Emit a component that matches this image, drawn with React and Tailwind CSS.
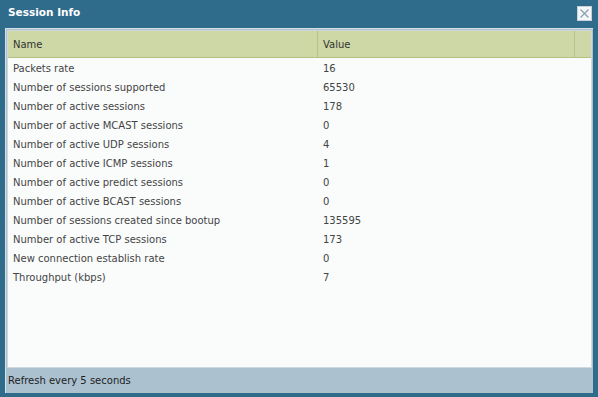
import React from "react";

const rows = [
  ["Packets rate", "16"],
  ["Number of sessions supported", "65530"],
  ["Number of active sessions", "178"],
  ["Number of active MCAST sessions", "0"],
  ["Number of active UDP sessions", "4"],
  ["Number of active ICMP sessions", "1"],
  ["Number of active predict sessions", "0"],
  ["Number of active BCAST sessions", "0"],
  ["Number of sessions created since bootup", "135595"],
  ["Number of active TCP sessions", "173"],
  ["New connection establish rate", "0"],
  ["Throughput (kbps)", "7"],
];

const SessionInfo = () => {
  return (
    <div
      className="w-[598px] h-[397px] bg-[#2f6b8b] flex flex-col px-[5px] pb-[4px]"
      style={{ fontFamily: "Tahoma, 'DejaVu Sans', sans-serif" }}
    >
      {/* Title bar */}
      <div className="h-[28px] flex items-center justify-between pl-[3px] pr-[1px] pb-[2px]">
        <span className="text-white font-bold text-[10.5px]">Session Info</span>
        <button className="w-[15px] h-[15px] bg-[#f4f7f9] border border-[#c7d3db] flex items-center justify-center">
          <svg width="11" height="11" viewBox="0 0 11 11">
            <path d="M1.5 1.5 L9.5 9.5 M9.5 1.5 L1.5 9.5" stroke="#8ea4b3" strokeWidth="1.4" />
          </svg>
        </button>
      </div>

      {/* Body */}
      <div className="flex-1 flex flex-col bg-[#abc1d0] border-l border-t border-[#d6e1e8]">
        <div className="flex-1 flex flex-col mx-[1px] mt-[1px] bg-[#fafcfc] border border-[#cfd8dc]">
          {/* Grid header */}
          <div className="h-[27px] flex bg-[#cdd8a6] border-b border-[#b3c07f] text-[10px] text-[#333]">
            <div className="w-[310px] flex items-center pl-[5px] border-r border-[#b6c28a]">Name</div>
            <div className="flex-1 flex items-center pl-[5px] border-r border-[#b6c28a]">Value</div>
            <div className="w-[16px]" />
          </div>
          <div className="flex flex-col pt-[1px] text-[10px] text-[#444]">
            {rows.map(([name, value]) => (
              <div key={name} className="h-[19px] flex items-center">
                <div className="w-[310px] pl-[5px]">{name}</div>
                <div className="pl-[5px]">{value}</div>
              </div>
            ))}
          </div>
        </div>
        {/* Footer */}
        <div className="h-[25px] flex items-center pl-[2px] text-[10px] text-[#222]">
          Refresh every 5 seconds
        </div>
      </div>
    </div>
  );
};

export default function App() {
  return <SessionInfo />;
}
